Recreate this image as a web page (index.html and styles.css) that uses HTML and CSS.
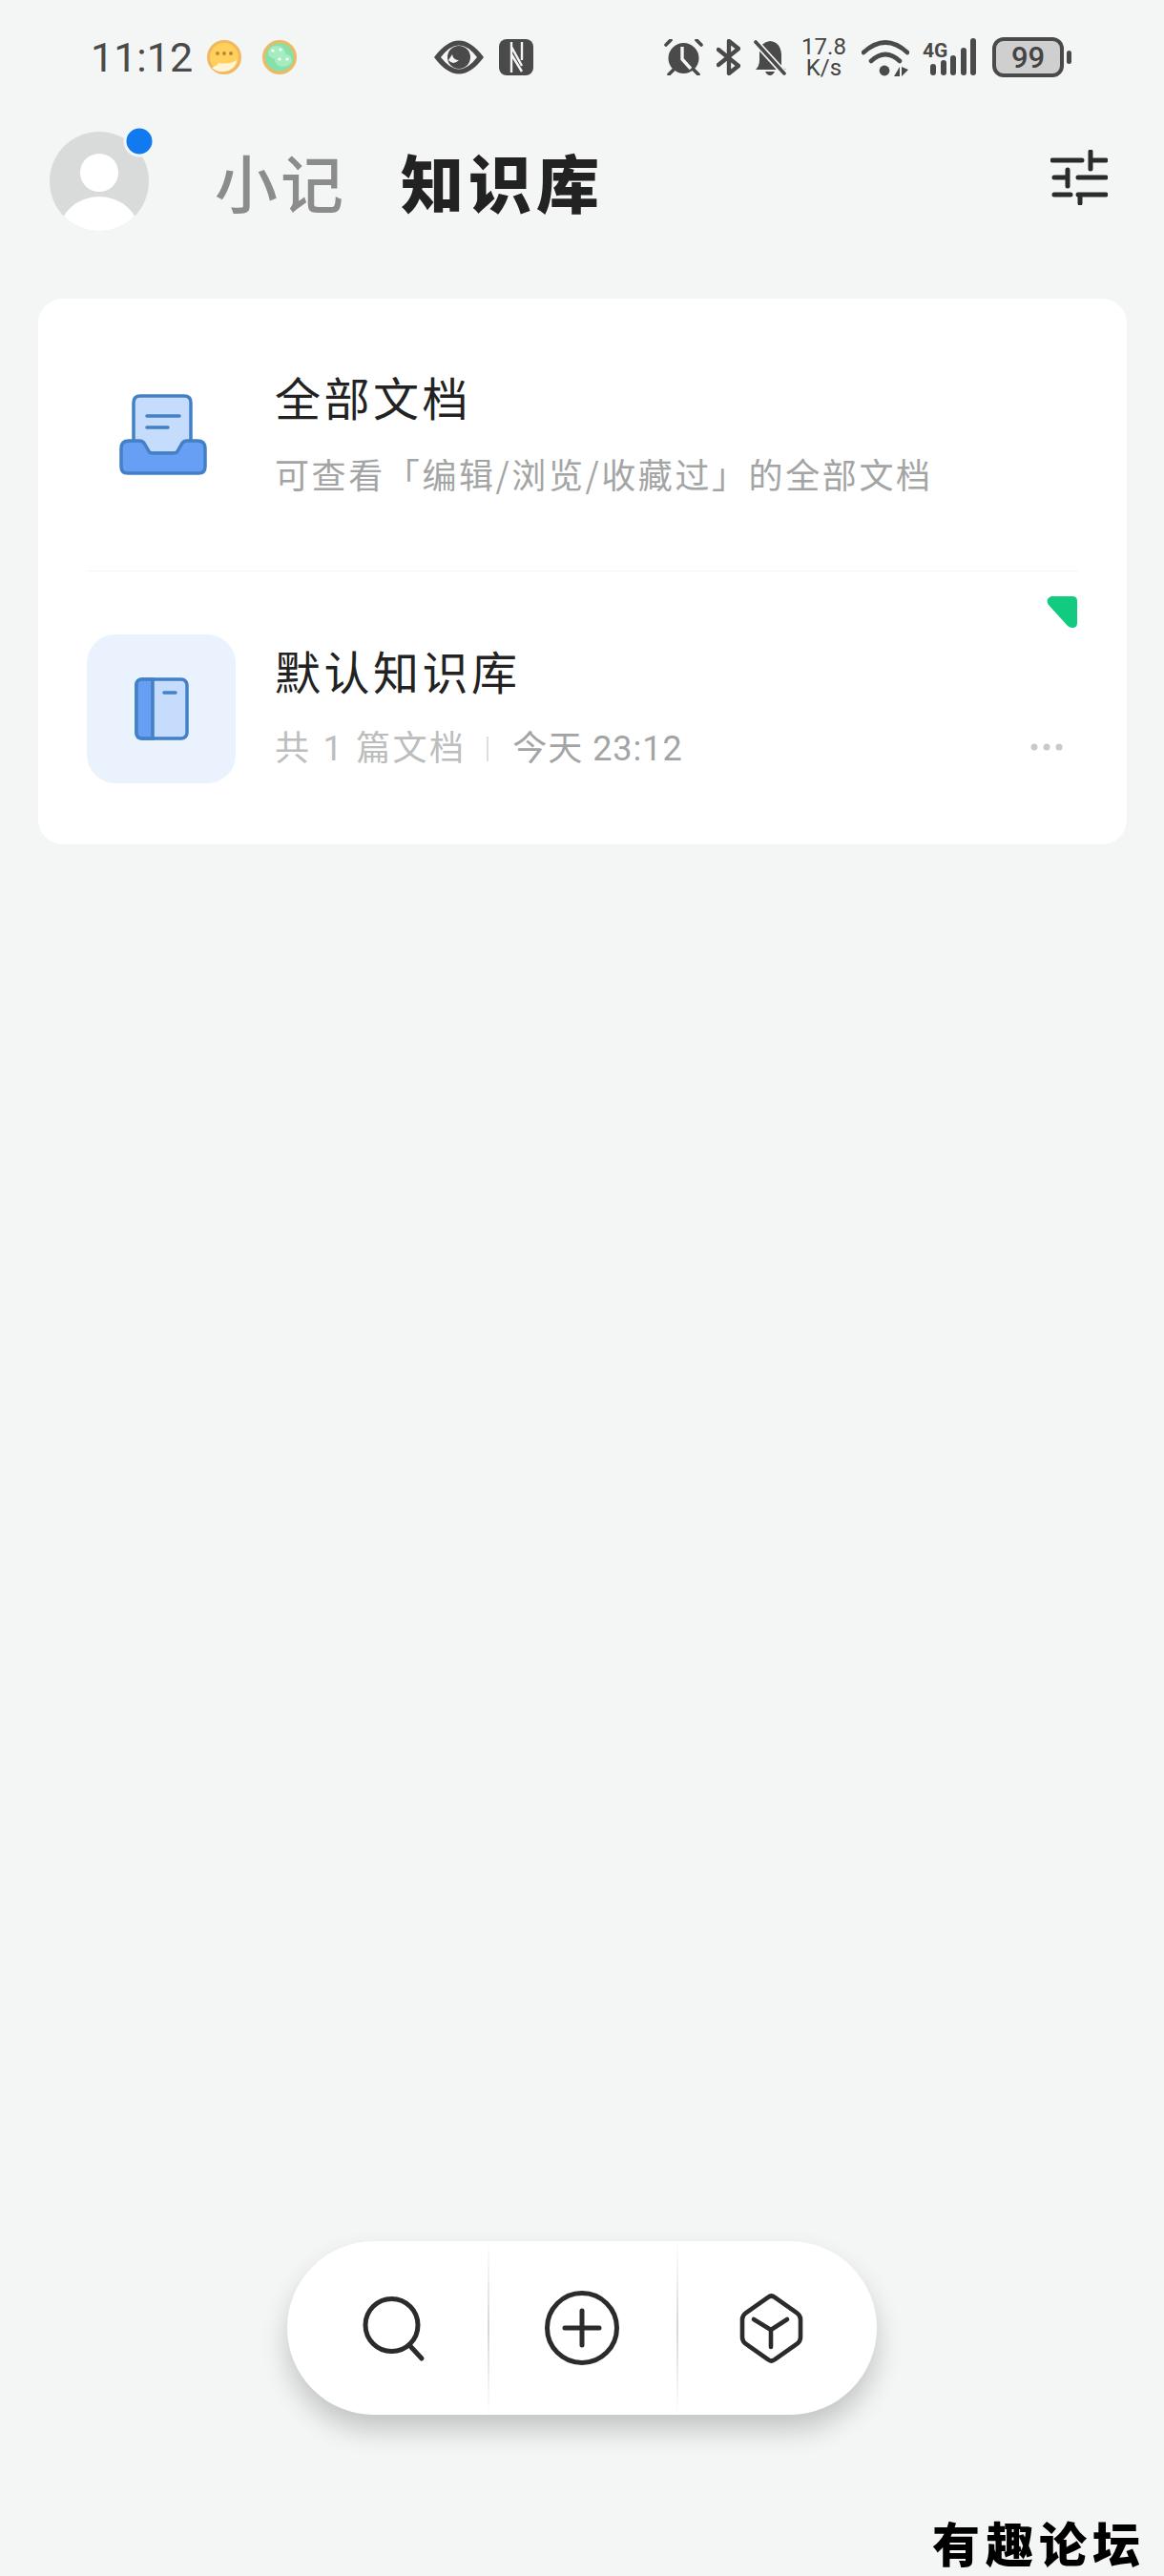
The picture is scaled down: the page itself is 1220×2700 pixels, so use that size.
FILE: index.html
```html
<!DOCTYPE html>
<html lang="zh-CN">

  <head>
    <meta charset="UTF-8">
    <meta name="viewport" content="width=device-width, initial-scale=1.0">
    <title>知识库</title>
    <link rel="stylesheet" href="styles.css">
  </head>

  <body>
    <div class="status-bar">
      <span class="time">11:12</span>
      <svg class="ic-msg" width="36" height="36" viewBox="0 0 36 36">
        <circle cx="18" cy="18" r="16.5" fill="#ffd05c" stroke="#f0b860" stroke-width="3"/>
        <path d="M5 29 Q12 26 12 24 Q24 26 31 21 Q30 31 18 33 Q10 34 5 29Z" fill="#fff3d8"/>
        <circle cx="11" cy="14" r="2" fill="#b98a3a"/><circle cx="18" cy="14" r="2" fill="#b98a3a"/><circle cx="25" cy="14" r="2" fill="#b98a3a"/>
      </svg>
      <svg class="ic-wechat" width="36" height="36" viewBox="0 0 36 36">
        <circle cx="18" cy="18" r="16.5" fill="#86e0a8" stroke="#f0b860" stroke-width="3"/>
        <ellipse cx="15" cy="13" rx="9" ry="7" fill="#a5ecc0"/>
        <ellipse cx="22" cy="21" rx="9" ry="7" fill="#a5ecc0"/>
        <circle cx="11" cy="11" r="1.6" fill="#fff"/><circle cx="19" cy="10" r="1.6" fill="#fff"/>
        <circle cx="18" cy="20" r="1.6" fill="#fff"/><circle cx="26" cy="20" r="1.6" fill="#fff"/>
      </svg>
      <svg class="ic-eye" width="52" height="36" viewBox="0 0 52 36">
        <path d="M0 18 Q26 -17 52 18 Q26 53 0 18Z" fill="#4a4a4a"/>
        <path d="M7 18 Q26 -7 45 18 Q26 43 7 18Z" fill="#f4f6f6"/>
        <circle cx="26" cy="18" r="12" fill="#4a4a4a"/>
        <path d="M15 21 Q20 27 26 21 Q20 21 19 15Z" fill="#f4f6f6"/>
      </svg>
      <svg class="ic-nfc" width="36" height="38" viewBox="0 0 36 38">
        <rect width="36" height="38" rx="8" fill="#4a4a4a"/>
        <path d="M13 3 V35 M13 8 L24 28 M13 16 L24 34 M24 3 V22" fill="none" stroke="#f4f6f6" stroke-width="2.4"/>
      </svg>

      <div class="status-right">
        <svg width="41" height="38" viewBox="0 0 41 38">
          <circle cx="20.5" cy="20" r="16" fill="#4a4a4a"/>
          <path d="M19 8 V21 L28 31" fill="none" stroke="#f4f6f6" stroke-width="3.4"/>
          <path d="M2 6 L7 1 M39 6 L34 1 M5 37 L10 32 M36 37 L31 32" stroke="#4a4a4a" stroke-width="3.6" stroke-linecap="round"/>
        </svg>
        <svg width="25" height="38" viewBox="0 0 25 38">
          <path d="M2 11 L23 28 L13 36 V2 L23 10 L2 27" fill="none" stroke="#4a4a4a" stroke-width="4.4" stroke-linejoin="round" stroke-linecap="round"/>
        </svg>
        <svg width="34" height="38" viewBox="0 0 34 38">
          <path d="M17 2 Q28 3 29 16 L29 29 L34 32 H2 Q6 28 6 22 V14 Q7 3 17 2Z" fill="#4a4a4a"/>
          <path d="M12 34 H22 Q20 38 17 38 Q14 38 12 34Z" fill="#4a4a4a"/>
          <path d="M2 3 L32 36" stroke="#f4f6f6" stroke-width="7"/>
          <path d="M2 3 L32 36" stroke="#4a4a4a" stroke-width="3.6" stroke-linecap="round"/>
        </svg>
        <div class="speed"><span>17.8</span><span>K/s</span></div>
        <svg width="50" height="40" viewBox="0 0 50 40">
          <path d="M2 15 Q25 -6 48 15 M10 24 Q25 10 40 24" fill="none" stroke="#4a4a4a" stroke-width="4.6" stroke-linecap="round"/>
          <circle cx="24" cy="34" r="5.4" fill="#4a4a4a"/>
          <path d="M40 30 V40 H34Z M42 30 V40 L49 33Z" fill="#4a4a4a"/>
        </svg>
        <svg class="ic-signal" width="57" height="40" viewBox="0 0 57 40">
          <text x="0" y="20" class="net-label">4G</text>
          <rect x="8" y="27" width="6" height="12" rx="3" fill="#4a4a4a"/>
          <rect x="19" y="23" width="6" height="16" rx="3" fill="#4a4a4a"/>
          <rect x="29" y="18" width="6" height="21" rx="3" fill="#4a4a4a"/>
          <rect x="40" y="10" width="6" height="29" rx="3" fill="#4a4a4a"/>
          <rect x="50" y="0" width="6" height="39" rx="3" fill="#4a4a4a"/>
        </svg>
        <div class="battery">99</div>
        <div class="battery-nub"></div>
      </div>
    </div>

    <div class="header">
      <svg class="avatar" width="112" height="110" viewBox="0 0 112 110">
        <defs>
          <clipPath id="avatarClip"><circle cx="52" cy="58" r="52"/></clipPath>
        </defs>
        <circle cx="52" cy="58" r="52" fill="#d9dbdb"/>
        <circle cx="52" cy="49" r="20" fill="#fff"/>
        <ellipse cx="52" cy="112" rx="42" ry="38" fill="#fff" clip-path="url(#avatarClip)"/>
        <circle cx="94" cy="16" r="16.5" fill="#f4f6f6"/>
        <circle cx="94" cy="16" r="13.5" fill="#117af0"/>
      </svg>
      <div class="tab">小记</div>
      <div class="tab tab-active">知识库</div>
      <svg class="filter" width="60" height="58" viewBox="0 0 60 58">
        <path d="M2 11 H33 M42 2 V20 M42 11 H58 M4 29 H18 M18 21 V38 M29 29 H58 M4 47 H21 M29 47 H58 M31 47 V56" fill="none" stroke="#2b2b2b" stroke-width="5" stroke-linecap="round"/>
      </svg>
    </div>

    <div class="card">
      <div class="row row-all">
        <div class="row-icon">
          <svg width="156" height="156" viewBox="0 0 156 156">
            <path d="M49 97 V44 Q49 37 56 37 H102 Q109 37 109 44 V97Z" fill="#c5dcfd" stroke="#4380c6" stroke-width="3.5"/>
            <path d="M63 58 H97 M63 70 H85" stroke="#4380c6" stroke-width="3.5" stroke-linecap="round"/>
            <path d="M36 92 Q36 84 44 84 H55 Q59 84 61 88 L65 95 Q66 97 69 97 H91 Q94 97 95 95 L99 88 Q101 84 105 84 H116 Q124 84 124 92 V111 Q124 118 117 118 H43 Q36 118 36 111Z" fill="#669ff3" stroke="#4380c6" stroke-width="3.5" stroke-linejoin="round"/>
          </svg>
        </div>
        <div class="row-text">
          <div class="row-title">全部文档</div>
          <div class="row-sub">可查看「编辑/浏览/收藏过」的全部文档</div>
        </div>
      </div>

      <div class="row row-kb">
        <svg class="sync-mark" width="32" height="33" viewBox="0 0 32 33">
          <path d="M5 0 H27 Q32 0 32 5 V28 Q32 33 27 33 Q24 33 22 31 L2 9 Q-2 3 5 0Z" fill="#12cb80"/>
        </svg>
        <div class="row-icon row-icon-tile">
          <svg width="156" height="156" viewBox="0 0 156 156">
            <rect x="52" y="47" width="53" height="62" rx="6" fill="#c5dcfd" stroke="#4380c6" stroke-width="3.5"/>
            <path d="M69 47 H58 Q52 47 52 53 V103 Q52 109 58 109 H69Z" fill="#669ff3" stroke="#4380c6" stroke-width="3.5"/>
            <path d="M81 61 H93" stroke="#4380c6" stroke-width="3.5" stroke-linecap="round"/>
          </svg>
        </div>
        <div class="row-text">
          <div class="row-title">默认知识库</div>
          <div class="row-sub row-meta">
            <span class="meta-count">共 1 篇文档</span>
            <span class="meta-sep"></span>
            <span>今天 23:12</span>
          </div>
        </div>
        <svg class="more" width="34" height="8" viewBox="0 0 34 8">
          <circle cx="4" cy="4" r="3.5" fill="#c9c9c9"/><circle cx="17" cy="4" r="3.5" fill="#c9c9c9"/><circle cx="30" cy="4" r="3.5" fill="#c9c9c9"/>
        </svg>
      </div>
    </div>

    <div class="dock">
      <div class="dock-btn">
        <svg width="80" height="80" viewBox="0 0 80 80">
          <circle cx="44.5" cy="37" r="27.5" fill="none" stroke="#2b2b2b" stroke-width="5"/>
          <path d="M63 58 L76 72" stroke="#2b2b2b" stroke-width="5" stroke-linecap="round"/>
        </svg>
      </div>
      <div class="dock-btn dock-sep">
        <svg width="80" height="80" viewBox="0 0 80 80">
          <circle cx="40" cy="40" r="36.5" fill="none" stroke="#2b2b2b" stroke-width="5"/>
          <path d="M22 40 H58 M40 22 V58" stroke="#2b2b2b" stroke-width="5" stroke-linecap="round"/>
        </svg>
      </div>
      <div class="dock-btn dock-sep">
        <svg width="80" height="80" viewBox="0 0 80 80">
          <path d="M31 8 Q34.5 5 38 8 L61 24 Q65 27 65 31 V50 Q65 54 61 57 L38 73 Q34.5 76 31 73 L8 57 Q4 54 4 50 V31 Q4 27 8 24Z" fill="none" stroke="#2b2b2b" stroke-width="4.6"/>
          <path d="M16 31 L34 42 L51 31 M34 42 V60" fill="none" stroke="#2b2b2b" stroke-width="4.6" stroke-linecap="round" stroke-linejoin="round"/>
        </svg>
      </div>
    </div>

    <div class="watermark">有趣论坛</div>
  </body>

</html>
```

FILE: styles.css
```css
html {
  font-family: "Noto Sans CJK SC", "Noto Sans", sans-serif;
}

body {
  margin: 0;
  height: 2700px;
  display: flex;
  flex-direction: column;
  background-color: #f4f6f6;
  overflow: hidden;
}

/* status bar */

.status-bar {
  display: flex;
  align-items: center;
  height: 44px;
  padding: 38px 97px 0 95px;
}

.time {
  width: 105px;
  font-family: Roboto, sans-serif;
  font-weight: 400;
  font-size: 43px;
  line-height: 44px;
  white-space: nowrap;
  color: #4a4a4a;
}

.ic-msg {
  margin-left: 17px;
}

.ic-wechat {
  margin-left: 22px;
}

.ic-eye {
  margin-left: 144px;
}

.ic-nfc {
  margin-left: 16px;
}

.status-right {
  display: flex;
  align-items: center;
  gap: 14px;
  margin-left: auto;
}

.speed {
  display: flex;
  flex-direction: column;
  align-items: center;
  width: 51px;
  font-family: Roboto, sans-serif;
  font-size: 24px;
  line-height: 22px;
  color: #444;
}

.net-label {
  font-family: Roboto, sans-serif;
  font-weight: 700;
  font-size: 21px;
  fill: #4a4a4a;
}

.battery {
  width: 67px;
  height: 34px;
  margin-left: 2px;
  border: 4px solid #4a4a4a;
  border-radius: 12px;
  background-color: #cfcfcf;
  font-family: Roboto, sans-serif;
  font-weight: 500;
  font-size: 31px;
  line-height: 35px;
  text-align: center;
  color: #444;
}

.battery-nub {
  width: 5px;
  height: 14px;
  margin-left: -11px;
  border-radius: 3px;
  background-color: #4a4a4a;
}

/* header */

.header {
  display: flex;
  align-items: flex-start;
  margin-top: 48px;
  padding: 0 59px 0 52px;
  height: 183px;
}

.avatar {
  flex-shrink: 0;
  margin-top: 2px;
}

.tab {
  width: 140px;
  margin-left: 61px;
  margin-top: 13px;
  font-size: 66px;
  font-weight: 500;
  line-height: 92px;
  letter-spacing: 3px;
  white-space: nowrap;
  color: #8c8c8c;
}

.tab-active {
  margin-left: 55px;
  font-weight: 900;
  letter-spacing: 5px;
  color: #222;
}

.filter {
  margin-left: auto;
  margin-top: 27px;
}

/* card */

.card {
  margin: 0 39px 0 40px;
  padding: 0 51px;
  border-radius: 26px;
  background-color: #fff;
}

.row {
  position: relative;
  display: flex;
  align-items: center;
}

.row-all {
  padding: 65px 0 64px;
  border-bottom: 1px solid #f3f4f4;
}

.row-kb {
  padding: 66px 0 64px;
}

.row-icon {
  flex-shrink: 0;
  width: 156px;
  height: 156px;
}

.row-icon svg {
  display: block;
}

.row-icon-tile {
  border-radius: 30px;
  background-color: #eaf3fd;
}

.row-text {
  margin: 0 0 8px 41px;
}

.row-kb .row-text {
  margin-bottom: 6px;
}

.row-title {
  font-size: 48px;
  line-height: 60px;
  letter-spacing: 3.5px;
  color: #222;
}

.row-sub {
  margin-top: 28px;
  font-size: 36px;
  line-height: 46px;
  letter-spacing: 2.6px;
  white-space: nowrap;
  color: #a3a5a5;
}

.row-meta {
  display: flex;
  align-items: center;
  margin-top: 30px;
  font-family: Roboto, "Noto Sans CJK SC", sans-serif;
  letter-spacing: 1px;
}

.meta-count {
  letter-spacing: 2.3px;
  word-spacing: 1px;
  color: #bcbdbd;
}

.meta-sep {
  width: 2px;
  height: 26px;
  margin: 0 25px 0 22px;
  background-color: #dedede;
}

.sync-mark {
  position: absolute;
  top: 26px;
  right: 1px;
}

.more {
  align-self: flex-end;
  margin: 0 16px 34px auto;
}

/* bottom dock */

.dock {
  display: flex;
  width: 618px;
  height: 182px;
  margin: auto 0 103px 301px;
  border-radius: 91px;
  background-color: #fff;
  box-shadow: 0 16px 28px rgba(0, 0, 0, 0.2);
}

.dock-btn {
  position: relative;
  flex: 0 0 210px;
  display: flex;
  align-items: center;
  justify-content: center;
}

.dock-btn:nth-child(2) {
  flex-basis: 198px;
}

.dock-sep {
  background-image: linear-gradient(to bottom, #fff, #d6d8d8 50%, #fff);
  background-size: 2px 100%;
  background-repeat: no-repeat;
}

.watermark {
  align-self: flex-end;
  margin: 0 19px 6px 0;
  font-weight: 900;
  font-size: 50px;
  line-height: 60px;
  letter-spacing: 6px;
  white-space: nowrap;
  color: #000;
}
```
